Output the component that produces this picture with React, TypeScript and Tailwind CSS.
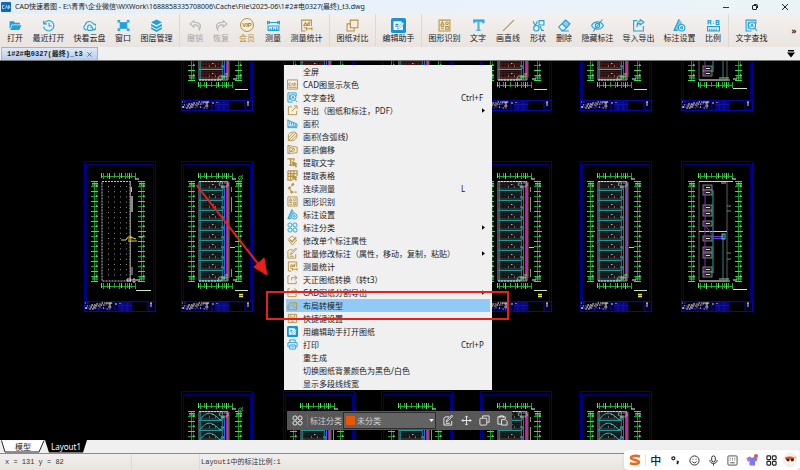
import { ReactNode } from 'react'
import clsx from 'clsx'

const GOLD = '#b9923c'
const BLUE = '#1da3dc'
const GREY = '#b4b4b4'

/* ---------- icons ---------- */

const glyphs: Record<string, ReactNode> = {
  open: (
    <g fill="currentColor" stroke="none">
      <path d="M1 4h8l2 3h9v3H5l-3 8H1z" />
      <path d="M6 11.500h17l-4 9H2.500z" />
    </g>
  ),
  recent: (
    <>
      <path d="M4 8a9.500 9.500 0 1 1-1 6" />
      <path d="M3 3v6h6M13 7v6h5" />
    </>
  ),
  cloud: (
    <>
      <path d="M7 20H5a5 5 0 0 1-1-9 8 8 0 0 1 15-2 5.500 5.500 0 0 1 0 11h-2" />
      <path d="M12 11a3.500 3.500 0 0 0-3 5 3 3 0 0 0 1 5h5a3 3 0 0 0 0-6 3 3 0 0 0-3-4z" />
    </>
  ),
  window: (
    <>
      <path d="M2 7V3h4M18 3h4v4M22 17v4h-4M6 21H2v-4" />
      <rect x="6" y="7" width="12" height="10" fill="currentColor" />
      <path d="M3 4l4 4M21 4l-4 4M3 20l4-4M21 20l-4-4" />
    </>
  ),
  layers: (
    <g fill="currentColor" stroke="none">
      <path d="M12 1l10 5-10 5.500L2 6z" />
      <path d="M2 9l10 5.500L22 9v4l-10 5.500L2 13z" />
      <path d="M2 15l10 5.500L22 15v3.500L12 24 2 18.500z" />
    </g>
  ),
  undo: <path d="M9 3L2 9l7 6v-4c7-1 10 3 10 9 5-8 1-14-10-14z" />,
  redo: <path d="M15 3l7 6-7 6v-4C8 10 5 14 5 20 0 12 4 6 15 6z" />,
  measure: (
    <>
      <path d="M1 3v7M23 3v7M2 6.500h20M5 4L2 6.500 5 9M19 4l3 2.500L19 9" />
      <path d="M2 13h20v8H2zM6 17v4M10 15v6M14 17v4M18 15v6" />
    </>
  ),
  stats: (
    <>
      <path d="M21 13V2H3v20h7" />
      <path d="M7 12l3-5 3 4 4-5v6zM7 16h4M12 15v6M22 15v6M12 18h10" />
    </>
  ),
  compare: (
    <>
      <path d="M8 9H2v13h13v-6" />
      <path d="M8 2h14v14H8z" />
    </>
  ),
  helper: (
    <>
      <rect x="0" y="0" width="24" height="24" rx="3" fill="#1593dd" stroke="none" />
      <path d="M4 5h12l3 3v11H4z" fill="#fff" stroke="none" />
      <path d="M7 10h5M7 13h4" stroke="#1593dd" />
      <path d="M21 9l-8 8-3 1 1-3 8-8z" fill="#fff" stroke="#1593dd" strokeWidth="1" />
    </>
  ),
  shapeId: (
    <>
      <path d="M2 2h20v20H2z" />
      <path d="M5 11l3-6 3 6zM14 14h5v5h-5zM5 14h6M5 18h6" />
      <circle cx="16.500" cy="8" r="2.500" />
    </>
  ),
  text: (
    <>
      <path d="M2 2h20v6h-3l-1-2h-4v13l2 1v2H8v-2l2-1V6H6L5 8H2z" fill="currentColor" stroke="none" opacity=".75" />
      <path d="M2 2h20v6" />
    </>
  ),
  line: <path d="M2 22L22 2" />,
  shapes: (
    <>
      <path d="M2 4l4 8 4-8M13 3h9v8h-9z" />
      <circle cx="8" cy="17" r="5" />
      <path d="M15 13l3 8h4" />
    </>
  ),
  erase: (
    <>
      <path d="M14 2l8 7-11 12H7l-6-6z" />
      <path d="M7.500 9L16 16 22 9l-8-7z" fill="currentColor" opacity=".45" />
      <path d="M7.500 9l8 7M6 22h14" />
    </>
  ),
  hide: (
    <>
      <path d="M1 12c5-9 17-9 22 0-5 9-17 9-22 0z" />
      <circle cx="12" cy="12" r="4" />
      <path d="M21 1L4 23" />
    </>
  ),
  share: (
    <>
      <path d="M10 3H3v19h18v-9" />
      <path d="M15 1l7 5-7 5V8c-4 0-6 2-6 7 0-8 2-11 6-11z" />
    </>
  ),
  exportBox: (
    <>
      <path d="M11 4H3v17h18v-8" />
      <path d="M15 2h7v7M21 3L10 14" />
    </>
  ),
  convert: (
    <>
      <path d="M6 4H2v17h18v-6" />
      <path d="M16 3l6 5-6 5M22 8H10v6" />
    </>
  ),
  markSet: (
    <>
      <path d="M11 1l5 7-8 13H2z" fill="currentColor" opacity=".55" />
      <path d="M11 1l-9 20h6" />
      <circle cx="16" cy="16" r="6" fill="#eee" />
      <circle cx="16" cy="16" r="2" />
    </>
  ),
  ratio: (
    <>
      <path d="M2 10V3h5v7M2 7h5M12 4v1M12 8v1M17 3h5v7h-5zM17 6.500h5" />
      <path d="M1 14h22v8H1zM5 18v4M9 18v4M13 18v4M17 18v4" />
    </>
  ),
  find: (
    <>
      <path d="M20 9V2H2v20h10" />
      <circle cx="13" cy="12" r="6.500" />
      <path d="M17.500 17l5 5M10.500 15l2.500-6 2.500 6M6 5v13" />
    </>
  ),
  cad: (
    <>
      <path d="M1 2h22v20H1zM3 18h18" />
      <path d="M8 9H4v5h4M10 14l2-5 2 5M16 9v5h2l2-2-2-3z" />
    </>
  ),
  area: (
    <>
      <path d="M2 3v18M2 5l20 8v5H2M6 7v7M10 9v6M14 11v5M18 12v5" />
      <path d="M2 21h20" />
    </>
  ),
  arc: (
    <>
      <path d="M3 21V8c6-8 19-8 19 2 0 6-6 11-10 11z" />
      <path d="M4 14L14 4M4 20L19 5M10 20L21 9" />
    </>
  ),
  offset: (
    <>
      <path d="M2 3l20 4v12L2 21z" />
      <path d="M6 8l10 2v5l-10 2zM3 4l3 4M3 20l3-3M8 16l6-6" />
    </>
  ),
  pickText: (
    <>
      <path d="M1 4h14v4M8 4v14M5 18h6" strokeWidth="3" />
      <path d="M12 10l10 5-4 1 3 5-2 1-3-5-3 3z" fill="currentColor" />
    </>
  ),
  pickTable: (
    <>
      <path d="M2 2h20v11M2 2v20h10M2 8h20M2 14h10M8 2v20M15 2v9" strokeWidth="2.500" />
      <path d="M12 11l10 5-4 1 3 5-3 0-2-4-3 3z" fill="currentColor" />
    </>
  ),
  chain: (
    <>
      <path d="M13 3L5 11l5 9h11" strokeDasharray="5 2" strokeWidth="2.500" />
      <circle cx="13" cy="3" r="2" fill="currentColor" />
      <circle cx="5" cy="11" r="2" fill="currentColor" />
      <circle cx="10" cy="20" r="2" fill="currentColor" />
    </>
  ),
  clover: (
    <>
      <circle cx="6.500" cy="6.500" r="4.500" />
      <circle cx="17.500" cy="6.500" r="4.500" />
      <circle cx="6.500" cy="17.500" r="4.500" />
      <circle cx="17.500" cy="17.500" r="4.500" />
    </>
  ),
  brush: (
    <>
      <path d="M2 10L11 2l10 9-9 11z" />
      <path d="M6 10l5 5 9-10" strokeWidth="3" />
    </>
  ),
  edit: (
    <>
      <path d="M13 4H5L2 7v15h17v-9" />
      <path d="M21 2l-9 10-5 3 2-5 9-9zM6 18h9" />
    </>
  ),
  layout: (
    <>
      <path d="M2 21V12l5-6h14v15z" />
      <path d="M3 18c4-8 8-8 10-4s5 2 8-1M15 9h3" />
    </>
  ),
  keys: (
    <>
      <path d="M3 3h18v18H3zM7 3v6h10V3" />
      <path d="M7 14h3M14 14h3M9 18h6" />
    </>
  ),
  print: (
    <>
      <path d="M6 8V2h12v6M6 17H2V8h20v9h-4" />
      <path d="M6 13h12v9H6zM9 17h6" />
    </>
  ),
  move: (
    <>
      <path d="M12 2v20M2 12h20" />
      <path d="M9 5l3-3 3 3M9 19l3 3 3-3M5 9l-3 3 3 3M19 9l3 3-3 3" />
    </>
  ),
  copy: (
    <>
      <path d="M8 6V2h14v14h-4" />
      <rect x="2" y="7" width="15" height="15" rx="2" />
    </>
  ),
  paste: (
    <>
      <path d="M9 20H2V4h16v5M6 6V2h8v4" />
      <path d="M10 10h8l4 4v8H10z" />
    </>
  ),
  smile: (
    <>
      <circle cx="12" cy="12" r="10" />
      <path d="M7 14c2 4 8 4 10 0M8.500 8v2M15.500 8v2" />
    </>
  ),
  mic: (
    <>
      <rect x="8" y="2" width="8" height="13" rx="4" />
      <path d="M4 11c0 10 16 10 16 0M12 19v4" />
    </>
  ),
  keyboard: (
    <>
      <rect x="2" y="2" width="20" height="20" rx="2" />
      <path d="M6 7h2M11 7h2M16 7h2M6 11h2M11 11h2M16 11h2M7 17h10" />
    </>
  ),
  apps: (
    <>
      <rect x="2" y="2" width="8" height="8" rx="2" />
      <rect x="14" y="2" width="8" height="8" rx="2" />
      <rect x="2" y="14" width="8" height="8" rx="2" />
      <rect x="14" y="14" width="8" height="8" rx="2" />
    </>
  ),
}

interface IconProps {
  name: string
  color?: string
  className?: string
  weight?: number
}

function Icon({ name, color = BLUE, className = 'size-[13px]', weight = 2 }: IconProps) {
  return (
    <svg
      viewBox="0 0 24 24"
      className={clsx('shrink-0', className)}
      style={{ color }}
      fill="none"
      stroke="currentColor"
      strokeWidth={weight}
      aria-hidden="true"
    >
      {glyphs[name]}
    </svg>
  )
}

function VipIcon() {
  return (
    <span className="flex size-[14px] items-center justify-center rounded-full border border-[#b9923c] font-['Liberation_Sans'] text-[6px] leading-none font-bold text-[#a87c1c]">
      VIP
    </span>
  )
}

/* ---------- title bar ---------- */

function TitleBar() {
  return (
    <header className="flex h-[14px] shrink-0 items-center bg-gradient-to-r from-[#e4eff5] via-[#e9f2fb] to-[#eaf4f8] pl-px text-[#1c1c1c]">
      <svg viewBox="0 0 20 20" className="size-[10px]" aria-hidden="true">
        <rect width="20" height="20" rx="2" fill="#1467b4" />
        <path d="M7 7H3v6h4M9 13l2-6 2 6M15 7v6h1l2-3-2-3z" stroke="#cfe8ff" strokeWidth="1.500" fill="none" />
      </svg>
      <h1 className="ml-1 flex-1 truncate text-[7px] leading-[14px]">
        CAD快速看图 - E:\青青\企业微信\WXWork\1688858335708006\Cache\File\2025-06\1#2#电0327(最终)_t3.dwg
      </h1>
      <button aria-label="最小化" className="flex w-7 justify-center">
        <svg viewBox="0 0 8 8" className="size-2" stroke="#333" fill="none"><path d="M1 4.500h6" /></svg>
      </button>
      <button aria-label="还原" className="flex w-[30px] justify-center">
        <svg viewBox="0 0 8 8" className="size-2" stroke="#222" fill="none">
          <path d="M3 1.500h2.500a1 1 0 0 1 1 1V5" />
          <rect x="1.500" y="2.500" width="4" height="4" rx=".5" />
        </svg>
      </button>
      <button aria-label="关闭" className="flex w-[30px] justify-center">
        <svg viewBox="0 0 8 8" className="size-2" stroke="#222" fill="none"><path d="M1 1l6 6M7 1L1 7" /></svg>
      </button>
    </header>
  )
}

/* ---------- tool bar ---------- */

type Tool = [label: string, icon: string, color?: string] | null

const tools: Tool[] = [
  ['打开', 'open'],
  ['最近打开', 'recent'],
  ['快看云盘', 'cloud'],
  ['窗口', 'window'],
  ['图层管理', 'layers'],
  null,
  ['撤销', 'undo', GREY],
  ['恢复', 'redo', GREY],
  ['会员', 'vip', GOLD],
  ['测量', 'measure'],
  ['测量统计', 'stats', GOLD],
  null,
  ['图纸对比', 'compare', GOLD],
  null,
  ['编辑助手', 'helper'],
  null,
  ['图形识别', 'shapeId', GOLD],
  ['文字', 'text'],
  ['画直线', 'line', GOLD],
  ['形状', 'shapes'],
  ['删除', 'erase'],
  ['隐藏标注', 'hide'],
  ['导入导出', 'share'],
  ['标注设置', 'markSet'],
  ['比例', 'ratio'],
  null,
  ['文字查找', 'find'],
]

const toolWidths: Record<number, string> = { 2: 'w-[26px]', 3: 'w-[34px]', 4: 'w-[41px]' }

function ToolBar() {
  return (
    <nav className="flex h-[33px] shrink-0 bg-gradient-to-b from-[#f3f1ef] to-[#e9e4df] pl-0.5">
      {tools.map((tool, i) => {
        if (!tool) return <span key={i} className="ml-0.5 w-[3px] shrink-0 border-l border-[#dcd8d4]" />
        const [label, icon, color] = tool
        return (
          <button
            key={label}
            className={clsx(
              'flex shrink-0 flex-col items-center pt-1 text-[8px] leading-3 whitespace-nowrap',
              toolWidths[label.length],
              color === GREY && 'text-[#a5a5a5]',
              icon === 'vip' && 'text-[#b9923c]',
            )}
          >
            <span className="flex h-[14px] items-center">
              {icon === 'vip' ? (
                <VipIcon />
              ) : (
                <Icon name={icon} color={color} className={icon === 'helper' ? 'size-[15px]' : 'size-[13px]'} />
              )}
            </span>
            {label}
          </button>
        )
      })}
      <button aria-label="更多" className="ml-auto w-3 text-[8px] font-bold">»</button>
    </nav>
  )
}

function FileTabs() {
  return (
    <div className="flex h-[14px] shrink-0 items-end justify-between border-b border-[#777] bg-[#f0f0f0] pl-px">
      <div className="flex h-[13px] items-center gap-1 border border-b-0 border-[#9db4d6] bg-gradient-to-b from-[#dfe9f8] to-[#b7cdec] px-[5px]">
        <button className="font-['Liberation_Mono','Noto_Sans_CJK_SC',monospace] text-[7px] leading-3 font-bold">
          1#2#电0327(最终)_t3
        </button>
        <button aria-label="关闭标签">
          <svg viewBox="0 0 6 6" className="size-[5px]" stroke="#555" fill="none"><path d="M.5.5l5 5M5.500.5l-5 5" /></svg>
        </button>
      </div>
      <button aria-label="全部文件" className="mr-[5px] self-center">
        <svg viewBox="0 0 8 8" className="size-2"><path d="M1 0h6v1.500H1zM0 2.500h8L4 7.500z" /></svg>
      </button>
    </div>
  )
}

/* ---------- drawing sheets ---------- */

type Plan = 'grid' | 'plan' | 'violet' | 'red' | 'arc' | 'riser'

const range = (n: number) => Array.from({ length: n }, (_, i) => i)

function Dimensions() {
  return (
    <g stroke="#22a830" fill="none">
      {[11, 58].map((x) => (
        <g key={x}>
          <path d={`M${x - 0.5} 20V121`} stroke="#1c8f29" />
          <path d={`M${x + 1.5} 20V121`} stroke="#145f1c" strokeWidth="0.800" />
          {range(21).map((i) => (
            <path key={i} d={`M${x - 4} ${20.5 + i * 5}h7`} stroke={i % 2 ? '#1d9a2b' : '#3ee04c'} />
          ))}
          <path d={`M${x - 3} 24h6M${x - 3} 22.500h6M${x - 3} 116h6M${x - 3} 118h6M${x - 4} 70.500h8`} stroke="#3fe04d" />
          {range(10).map((i) => (
            <path key={i} d={`M${x + 1} ${25 + i * 10}h1.500`} stroke="#c9f5cc" />
          ))}
        </g>
      ))}
      {[15, 125].map((y) => (
        <g key={y}>
          <path d={`M17 ${y + 0.5}H51`} />
          {[17, 19, 23, 25, 30, 35, 37, 41, 43, 45, 47, 51].map((x, i) => (
            <path key={x} d={`M${x + 0.5} ${y - 3}v${i % 2 ? 6 : 5}`} stroke={i % 3 ? '#22a830' : '#4bea58'} />
          ))}
        </g>
      ))}
      <path d="M51 18h4M52 119h4" stroke="#dfe" />
    </g>
  )
}

function TitleBlock() {
  const inks = ['#d6cf8e', '#fff', '#8d8648', '#f0c14a', '#3a3ad8']
  return (
    <g>
      <rect x="0.500" y="140.500" width="71" height="10" fill="#00002c" stroke="#0808a0" />
      <rect x="34" y="141" width="14" height="9" fill="#08087c" />
      <rect x="49" y="142" width="15" height="8" fill="#000" />
      <path d="M26 141v9M31 141v9M0 144.500h26M0 147.500h26M34 144.500h14M64 141v9M38 141v9M43 141v9" stroke="#1717b4" strokeWidth="0.700" />
      {range(40).map((i) => (
        <rect
          key={i}
          x={1 + ((i * 7) % 26)}
          y={141.5 + ((i * 5 + ((i * i) % 3)) % 7)}
          width={1 + (i % 3) * 0.6}
          height="1"
          fill={inks[i % 5]}
        />
      ))}
      <path d="M22 142h4v5M67 142v4M66 142h2M32 142v2M36 142v1" stroke="#f0d9a0" fill="none" />
    </g>
  )
}

function FloorPlan({ kind }: { kind: Plan }) {
  const pipe = kind === 'violet' ? '#8a4cf0' : '#ee1ce0'
  return (
    <g fill="none">
      <path d="M18 20.500H47V120H18z" stroke="#bdbdbd" strokeWidth="0.800" />
      {range(10).map((i) => {
        const y = 20 + i * 10
        return (
          <g key={i}>
            <rect x="20" y={y + 1} width="21" height="8" fill={kind === 'red' ? '#2a0f0f' : '#141414'} stroke="#4a4a4a" strokeWidth="0.500" />
            <path d={`M21 ${y + 4}h19M21 ${y + 7}h19`} stroke={kind === 'red' ? '#a02a20' : '#3b3b3b'} strokeWidth="0.600" strokeDasharray="2 1" />
            <path d={`M28 ${y + 6}h1M31 ${y + 3.5}h1.500M34 ${y + 6}h1`} stroke="#d8d8d8" strokeWidth="0.800" />
            <path d={`M18 ${y + 9.5}h24`} stroke={kind === 'red' ? '#8f8f8f' : '#1f9a9c'} />
            <path d={`M18 ${y + 8}h24`} stroke="#777" strokeWidth="0.400" />
            <path d={`M40 ${y + 6}h3v3`} stroke="#35c8e6" />
            {kind === 'arc' && <path d={`M19 ${y + 9}c6-9 12-9 20 0l4-3`} stroke="#28bdbd" />}
          </g>
        )
      })}
      <path d="M19.500 21V119M41.500 21V119" stroke="#1b8c8e" strokeWidth="0.800" />
      <path d="M43.500 28V118" stroke="#226be0" />
      <path d="M46 21V117" stroke={pipe} strokeWidth="1.500" />
      <path d="M48 21V117" stroke="#8c8a35" strokeWidth="0.800" />
      <path d="M18 20.500h24M18 120h22" stroke="#d5d5d5" strokeDasharray="2 1" />
      <path d="M38 22h9v3h-8zM40 26h6M38 116h8v3h-9z" stroke="#b0c8b0" strokeWidth="0.800" strokeDasharray="2 0.500" />
      <path d="M40 117h6M44 114h3" stroke="#8fe34a" />
      <path d="M54 129.500h13" stroke="#bde8c0" />
      {kind !== 'red' && (
        <>
          <path d="M49 86.500h5" stroke="#d9d92a" />
          <path d="M58 133.500h4M58 135.500h4" stroke="#e8e83a" strokeWidth="1.500" />
        </>
      )}
      {kind === 'plan' && <path d="M50.500 26v5M50.500 36v15M50.500 108v8" stroke="#8b8b8b" />}
    </g>
  )
}

function GridPlan() {
  return (
    <g fill="none">
      <path d="M18 20.500H46V120H18z" stroke="#c4c4c4" strokeDasharray="2 1" />
      {range(18).map((r) =>
        [24, 30, 36, 42].map((x) => <rect key={`${r}-${x}`} x={x} y={25 + r * 5.2} width="1" height="1" fill="#8f8f8f" />),
      )}
      <path d="M46.500 20V121" stroke="#888" />
      <rect x="47" y="35" width="2" height="16" fill="#8b8b8b" />
      <path d="M47.500 26v5M48 106v8" stroke="#bbb" />
      <path d="M37 79h5l2-3h4M44 80h9M46 76l6 2M55 76h4" stroke="#e2d83a" />
      <path d="M44 78h4" stroke="#f08030" />
      <path d="M43 118h4v2h-4zM49 118h2v3h-2z" stroke="#ddd" />
      <path d="M52 129.500h15" stroke="#c5eec8" />
    </g>
  )
}

function RiserPlan() {
  return (
    <g fill="none">
      <path d="M18 20.500H46V120H18z" stroke="#777" strokeWidth="0.800" />
      <path d="M18 20.500h34M18 120h31M18 70.500h28" stroke="#cfcfcf" />
      {[24, 29, 44, 50, 60, 75, 86, 92, 106, 111].map((y) => (
        <g key={y}>
          <rect x="22" y={y} width="9" height="5" fill="#181818" stroke="#9b9b9b" strokeWidth="0.800" />
          <path d={`M25 ${y + 2.5}h4`} stroke="#d8d8d8" />
        </g>
      ))}
      <path d="M32 29V112" stroke="#22a5a8" />
      <path d="M24 28V116M24 64l8 11" stroke="#8b2fae" />
      <path d="M32 75.500h11M32 77.500h11" stroke="#6d3fd0" />
      <path d="M42 73V118" stroke="#23888a" />
      <rect x="41" y="73" width="3" height="5" stroke="#4ec6e8" />
      <path d="M38 118h10M40 22h5" stroke="#9fd08f" />
      <path d="M46 45h4M46 50h4M46 92h4M46 98h4" stroke="#2faf3c" />
      <path d="M52 128.500h14" stroke="#c5eec8" />
    </g>
  )
}

interface SheetProps {
  x: number
  y: number
  kind: Plan
}

function Sheet({ x, y, kind }: SheetProps) {
  return (
    <g transform={`translate(${x} ${y})`}>
      <rect x="0.500" y="0.500" width="71" height="150" fill="#000" stroke="#00008c" />
      <path d="M2.500 140V3.500H69.500V140" stroke="#000078" fill="none" />
      <Dimensions />
      {kind === 'grid' && <GridPlan />}
      {kind === 'riser' && <RiserPlan />}
      {kind !== 'grid' && kind !== 'riser' && <FloorPlan kind={kind} />}
      <TitleBlock />
    </g>
  )
}

const sheets: SheetProps[] = [
  { x: 181, y: -101, kind: 'red' },
  { x: 283, y: -101, kind: 'red' },
  { x: 381, y: -101, kind: 'red' },
  { x: 480, y: -101, kind: 'red' },
  { x: 580, y: -101, kind: 'red' },
  { x: 681, y: -101, kind: 'riser' },
  { x: 84, y: 100, kind: 'grid' },
  { x: 181, y: 100, kind: 'plan' },
  { x: 283, y: 100, kind: 'plan' },
  { x: 381, y: 100, kind: 'plan' },
  { x: 480, y: 100, kind: 'plan' },
  { x: 580, y: 100, kind: 'violet' },
  { x: 681, y: 100, kind: 'riser' },
  { x: 181, y: 330, kind: 'arc' },
  { x: 283, y: 330, kind: 'plan' },
  { x: 381, y: 330, kind: 'plan' },
  { x: 480, y: 330, kind: 'plan' },
  { x: 580, y: 330, kind: 'arc' },
]

function Drawing() {
  return (
    <svg className="absolute inset-0 size-full" aria-label="图纸">
      {sheets.map((s) => (
        <Sheet key={`${s.x}/${s.y}`} {...s} />
      ))}
      <g stroke="#22a52f" fill="none">
        <circle cx="240.500" cy="117" r="2" />
        <path d="M238 120l5-6" />
        <circle cx="240.500" cy="349" r="2" />
        <path d="M238 352l5-6" />
      </g>
    </svg>
  )
}

/* ---------- context menu ---------- */

interface MenuItem {
  label: string
  icon?: string
  color?: string
  keys?: string
  sub?: boolean
  active?: boolean
}

const menuItems: MenuItem[] = [
  { label: '全屏' },
  { label: 'CAD图显示灰色', icon: 'cad', color: GOLD },
  { label: '文字查找', icon: 'find', keys: 'Ctrl+F' },
  { label: '导出（图纸和标注，PDF）', icon: 'exportBox', color: GOLD, sub: true },
  { label: '面积', icon: 'area' },
  { label: '面积(含弧线)', icon: 'arc', color: GOLD },
  { label: '面积偏移', icon: 'offset', color: GOLD },
  { label: '提取文字', icon: 'pickText', color: GOLD },
  { label: '提取表格', icon: 'pickTable', color: GOLD },
  { label: '连续测量', icon: 'chain', color: GOLD, keys: 'L' },
  { label: '图形识别', icon: 'shapeId', color: GOLD },
  { label: '标注设置', icon: 'markSet' },
  { label: '标注分类', icon: 'clover', sub: true },
  { label: '修改单个标注属性', icon: 'brush', color: GOLD },
  { label: '批量修改标注（属性，移动，复制，粘贴）', icon: 'edit', color: GOLD, sub: true },
  { label: '测量统计', icon: 'stats', color: GOLD },
  { label: '天正图纸转换（转t3）', icon: 'convert', color: GOLD },
  { label: 'CAD图纸分割导出', icon: 'convert', color: GOLD, sub: true },
  { label: '布局转模型', icon: 'layout', color: GOLD, active: true },
  { label: '快捷键设置', icon: 'keys', color: GOLD },
  { label: '用编辑助手打开图纸', icon: 'helper' },
  { label: '打印', icon: 'print', keys: 'Ctrl+P' },
  { label: '重生成' },
  { label: '切换图纸背景颜色为黑色/白色' },
  { label: '显示多段线线宽' },
]

function ContextMenu() {
  return (
    <div role="menu" className="absolute top-1 left-[284px] w-[208px] bg-[#f0f0f0] px-0.5 text-[#1a1a1a]">
      {menuItems.map((item) => (
        <button
          key={item.label}
          role="menuitem"
          className={clsx(
            'flex h-[13px] w-full items-center text-left text-[8px] leading-[13px] whitespace-nowrap',
            item.active && 'bg-[#91c9f7]',
          )}
        >
          <span
            className={clsx('mr-0.5 flex h-[13px] w-[15px] items-center border-r pl-px', item.active ? 'border-transparent' : 'border-[#f8f8f8]')}
          >
            {item.icon && <Icon name={item.icon} color={item.color} className="size-[11px]" />}
          </span>
          <span className="flex-1">{item.label}</span>
          {item.keys && <kbd className="w-[29px] font-[inherit]">{item.keys}</kbd>}
          {item.sub && (
            <svg viewBox="0 0 4 6" className="mr-[5px] h-[5px] w-[3px]"><path d="M0 0l4 3-4 3z" /></svg>
          )}
        </button>
      ))}
    </div>
  )
}

function MarkToolbar() {
  return (
    <div className="absolute top-[350px] left-[287px] flex h-[19px] w-[225px] items-center bg-[#575757] text-[8px] text-[#d0d0d0]">
      <button aria-label="分类" className="flex w-5 justify-center">
        <Icon name="clover" color="#f0f0f0" className="size-[11px]" />
      </button>
      <label htmlFor="category" className="w-9 border-l border-[#6a6a6a] pl-[2px] whitespace-nowrap">标注分类</label>
      <div className="relative h-[17px] w-[93px] border border-[#2d2d2d] bg-[#636363]">
        <span className="absolute top-[3px] left-[2px] size-[9px] bg-[#ea5504]" />
        <select id="category" className="size-full appearance-none pl-[13px] text-[8px] leading-none outline-none">
          <option>未分类</option>
        </select>
        <svg viewBox="0 0 6 4" className="pointer-events-none absolute top-[6px] right-[1px] h-[3px] w-[5px]" fill="#fff"><path d="M0 0h6L3 4z" /></svg>
      </div>
      <div className="flex flex-1 justify-around pl-[3px]">
        {[['编辑', 'edit'], ['移动', 'move'], ['复制', 'copy'], ['粘贴', 'paste']].map(([label, icon]) => (
          <button key={icon} aria-label={label}>
            <Icon name={icon} color="#f0f0f0" className="size-[11px]" />
          </button>
        ))}
      </div>
    </div>
  )
}

function Annotations() {
  return (
    <>
      <svg className="pointer-events-none absolute top-[122px] left-[195px] h-[94px] w-[74px]" viewBox="0 0 74 94" aria-hidden="true">
        <path d="M1.500 2L64 82" stroke="#e8201c" strokeWidth="2" />
        <path d="M72 92L59 84l10-9z" fill="#e8201c" stroke="#e8201c" />
      </svg>
      <div className="pointer-events-none absolute top-[230px] left-[266px] h-[29px] w-[243px] border-2 border-[#e8201c]" />
    </>
  )
}

/* ---------- bottom bars ---------- */

function LayoutTabs() {
  return (
    <div className="flex h-[14px] shrink-0 items-start border-b border-[#8b8b8b] bg-[#f0f0f0] pl-px text-[8px]">
      <button className="relative h-[13px] w-[44px]">
        <svg viewBox="0 0 44 13" className="absolute inset-0 size-full">
          <path d="M.5.5L4 12h34l5-11.500" fill="#fff" stroke="#222" />
        </svg>
        <span className="relative leading-3">模型</span>
      </button>
      <button className="relative h-[13px] w-[42px] text-white">
        <svg viewBox="0 0 42 13" className="absolute inset-0 size-full">
          <path d="M0 0h42l-4 12.500H4z" />
        </svg>
        <span className="relative leading-3">Layout1</span>
      </button>
    </div>
  )
}

function StatusBar() {
  return (
    <footer className="flex h-4 shrink-0 items-center bg-gradient-to-b from-[#f1efed] to-[#e8e4e0] font-['Liberation_Mono','Noto_Sans_CJK_SC',monospace] text-[7px] text-[#333]">
      <span className="h-full w-[132px] border-r border-[#dedad6] pl-[5px] leading-4">x = 131 y = 82</span>
      <span className="h-full w-[68px] border-r border-[#dedad6]" />
      <span className="pl-px leading-4">Layout1中的标注比例:1</span>
    </footer>
  )
}

function ImeBar() {
  return (
    <div className="absolute right-0 bottom-0 flex h-5 w-[176px] items-center rounded bg-white shadow-sm">
      <button aria-label="搜狗输入法" className="flex w-[22px] justify-center border-r border-[#e2e2e2]">
        <svg viewBox="0 0 12 12" className="size-3" fill="none" stroke="#f0641e" strokeWidth="2.500">
          <path d="M11 2.500C6 1 2 2 2 4s8 2 8 4-5 2.500-9 1.200" />
        </svg>
      </button>
      <div className="grid flex-1 grid-cols-8 place-items-center">
        <button className="text-[11px] leading-none font-medium">中</button>
        <button aria-label="标点">
          <svg viewBox="0 0 12 12" className="size-[10px]" fill="none" stroke="#222" strokeWidth="1.500">
            <circle cx="4" cy="4" r="1.800" />
            <path d="M8 8h1.500v1L8.500 11" strokeWidth="2" />
          </svg>
        </button>
        <button aria-label="表情"><Icon name="smile" color="#222" className="size-[11px]" /></button>
        <button aria-label="语音"><Icon name="mic" color="#222" className="size-[11px]" /></button>
        <button aria-label="键盘"><Icon name="keyboard" color="#444" className="size-[11px]" /></button>
        <button aria-label="皮肤">
          <svg viewBox="0 0 24 24" className="size-3">
            <path d="M7 5l-6 4 3 6 3-1v9h11v-9l3 1 2-6-5-4c-3 3-8 3-11 0z" fill="#7a7bf2" />
            <path d="M7 5l-6 4 3 6 3-1V5z" fill="#c66be0" />
            <circle cx="20" cy="4" r="4" fill="#f4533a" />
          </svg>
        </button>
        <button aria-label="工具箱"><Icon name="apps" color="#222" className="size-[11px]" weight={2.5} /></button>
        <button aria-label="账号">
          <svg viewBox="0 0 24 24" className="size-[14px]">
            <circle cx="12" cy="12" r="11" fill="#f7f2ee" stroke="#e3ddd8" />
            <path d="M3 8c5-3 12-2 17 0l-2 3H5z" fill="#e8541e" />
            <path d="M5 10h6v4H7zM13 10h6l-1 4h-4z" fill="#3a2018" />
            <path d="M21 4l1 2.500 2 .5-2 1-1 2-1-2-2-1 2-.5z" fill="#f8c832" />
          </svg>
        </button>
      </div>
    </div>
  )
}

export default function App() {
  return (
    <div className="relative flex h-screen flex-col overflow-hidden bg-[#f0f0f0] font-['Noto_Sans','Noto_Sans_CJK_SC',sans-serif] text-[#222]">
      <TitleBar />
      <ToolBar />
      <FileTabs />
      <main className="relative flex-1 overflow-hidden bg-black">
        <Drawing />
        <ContextMenu />
        <MarkToolbar />
        <Annotations />
      </main>
      <LayoutTabs />
      <StatusBar />
      <ImeBar />
    </div>
  )
}
